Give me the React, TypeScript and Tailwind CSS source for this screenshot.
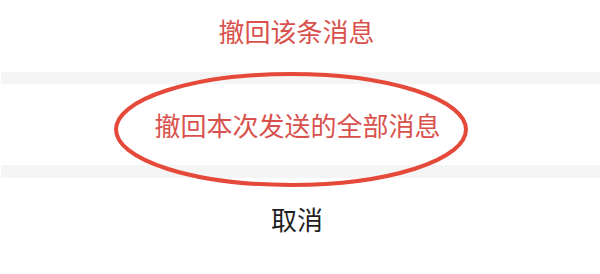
import React from 'react'

// Action sheet: recall options with a hand-drawn highlight ring
const font = { fontFamily: '"Noto Sans CJK SC", "Noto Sans", sans-serif' }

export default function App() {
  return (
    <div className="relative w-[600px] h-[274px] overflow-hidden bg-white" style={font}>
      <div className="h-[72px] flex items-center justify-center pb-[10px] pr-[7px]">
        <span className="text-[26px] leading-none text-[#d9514d]">撤回该条消息</span>
      </div>
      <div className="h-[12px] bg-[#f5f5f5] ml-[1px]" />
      <div className="h-[81px] flex items-center justify-center pr-[5px]">
        <span className="text-[26px] leading-none text-[#d9514d]">撤回本次发送的全部消息</span>
      </div>
      <div className="h-[13px] bg-[#f5f5f5] ml-[1px]" />
      <div className="h-[81px] flex items-center justify-center pr-[6px]">
        <span className="text-[26px] leading-none text-[#1f1f1f]">取消</span>
      </div>

      {/* red highlight ring */}
      <svg className="absolute left-0 top-0 pointer-events-none" width="600" height="274">
        <ellipse cx="291" cy="129.5" rx="175" ry="55.5" fill="none" stroke="#e5493a" strokeWidth="4" />
      </svg>
    </div>
  )
}
